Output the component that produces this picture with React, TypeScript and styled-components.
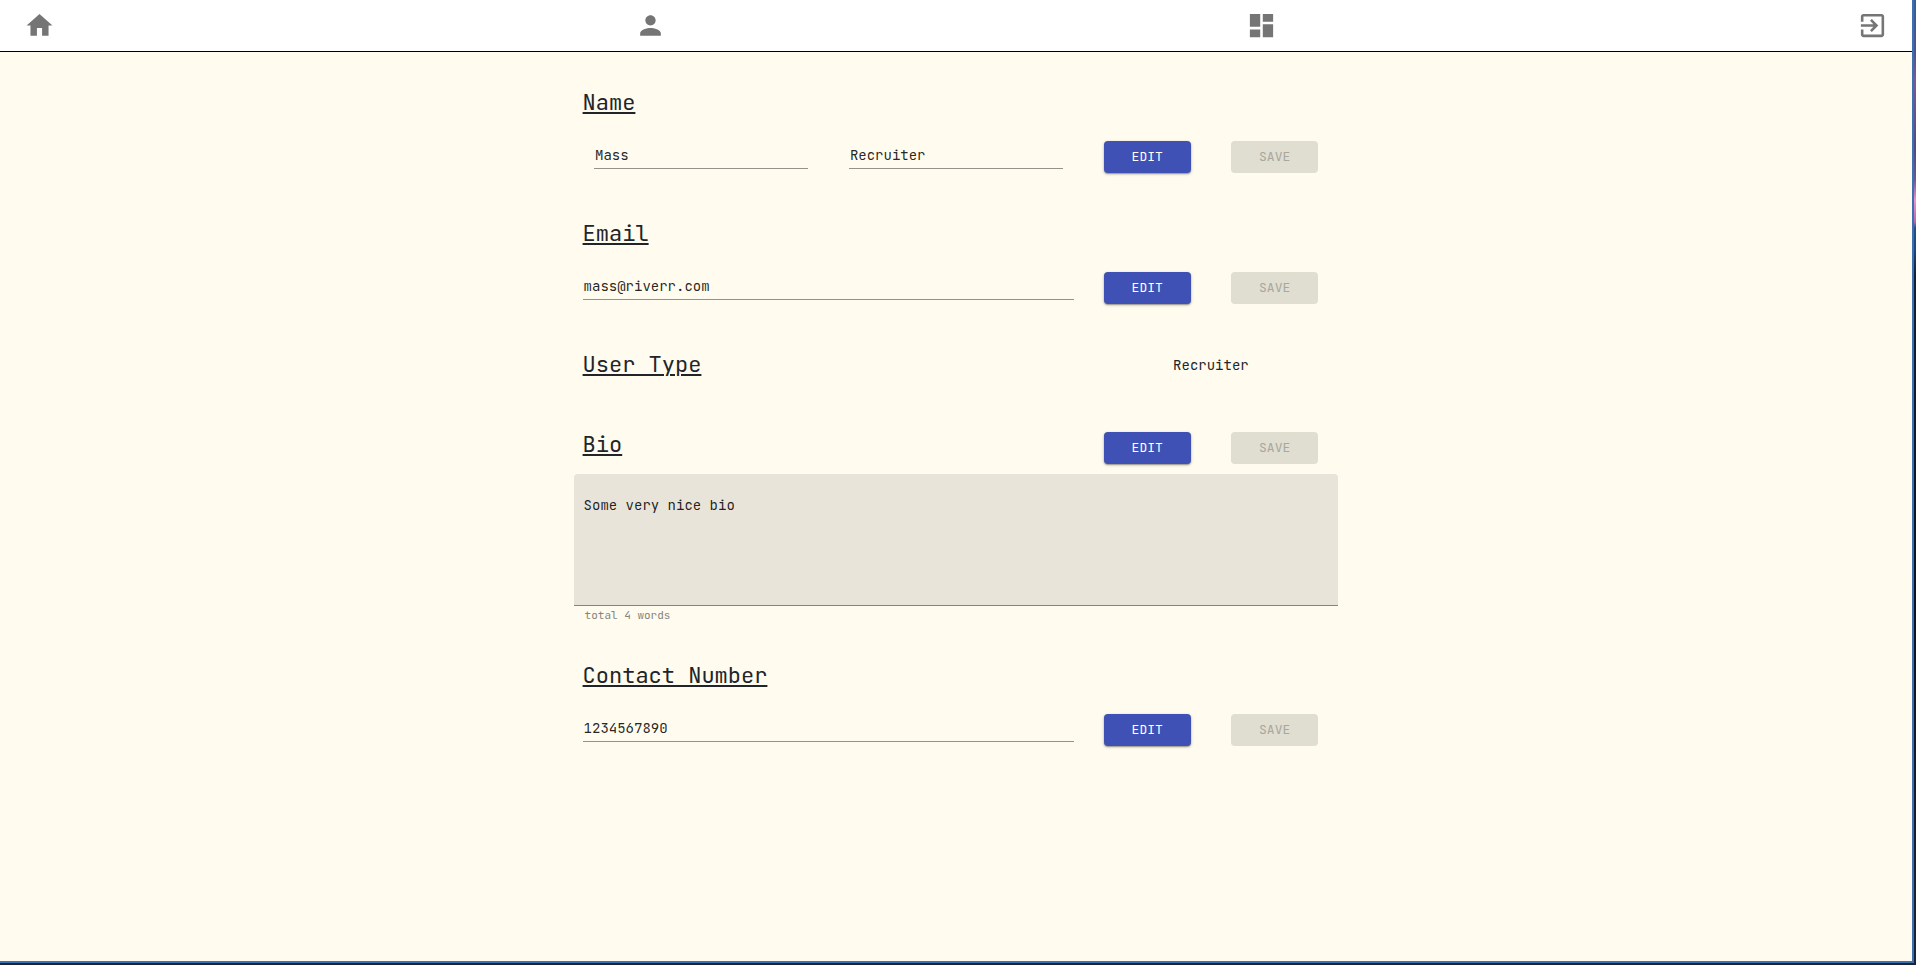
import React, { useState } from "react";
import styled, { createGlobalStyle } from "styled-components";

const GlobalStyle = createGlobalStyle`
  *, *::before, *::after { box-sizing: border-box; }
  body {
    margin: 0;
    color: #212529;
    font-family: "JetBrains Mono", "DejaVu Sans Mono", monospace;
    font-size: 14px;
  }
`;

const Desktop = styled.div`
  display: flex;
  min-height: 100vh;
  padding: 0 2px 2px 0;
  background: linear-gradient(
    #35609c 0,
    #46558f 50px,
    #7a5a96 80px,
    #4d4a82 150px,
    #6a5796 180px,
    #ee92cc 200px,
    #b06bb0 222px,
    #234f8f 228px,
    #1d4680 250px,
    #101f36 275px,
    #0a1222 600px,
    #1b2336 100%
  );
`;

const Window = styled.div`
  flex: 1;
  border: solid #3e6fae;
  border-width: 0 2px 2px 0;
  background: #fffbee;
`;

const NavBar = styled.nav`
  display: flex;
  align-items: center;
  justify-content: space-between;
  padding: 10px 24px;
  border-bottom: 1px solid #000;
  background: #fff;
`;

const NavLink = styled.a`
  display: flex;
  color: #757575;
`;

const NavIcon = styled.svg`
  width: 31px;
  height: 31px;
  fill: currentColor;
`;

const Profile = styled.main`
  display: flex;
  flex-direction: column;
  gap: 20px;
  width: 40%;
  min-width: 560px;
  margin: 0 auto;
  padding: 20px 0;
`;

const Section = styled.section`
  display: flex;
  flex-direction: column;
`;

const HeadingRow = styled.div`
  display: grid;
  grid-template-columns: 4fr 1fr 1fr;
  align-items: center;
  height: 60px;
  padding-top: 2px;
`;

const Heading = styled.h2`
  margin: 0;
  padding-left: 9px;
  font-size: 22px;
  font-weight: 400;
  line-height: 28px;
  text-decoration: underline;
  text-decoration-thickness: 2px;
  text-underline-offset: 2px;
`;

const UserType = styled.span`
  grid-column: 2 / 4;
  text-align: center;
`;

const FieldRow = styled.div<{ $split?: boolean }>`
  display: grid;
  grid-template-columns: ${(p) => (p.$split ? "2fr 2fr" : "4fr")} 1fr 1fr;
  align-items: start;
  justify-items: center;
  height: 51px;
  padding-top: 9px;
`;

const TextInput = styled.input<{ $wide?: boolean }>`
  width: ${(p) => (p.$wide ? "calc(100% - 18px)" : "84%")};
  height: 28px;
  padding: 0 1px;
  border: 0;
  border-bottom: 1px solid rgba(0, 0, 0, 0.42);
  border-radius: 0;
  outline: 0;
  background: transparent;
  color: rgba(0, 0, 0, 0.87);
  font: inherit;
`;

const Button = styled.button`
  justify-self: center;
  width: 68%;
  height: 32px;
  padding: 0 0 1px;
  border: 0;
  border-radius: 4px;
  background: #3f51b5;
  box-shadow: 0 1px 3px rgba(0, 0, 0, 0.3), 0 1px 1px rgba(0, 0, 0, 0.2);
  color: #fff;
  font: inherit;
  font-size: 13px;
  text-transform: uppercase;
  cursor: pointer;

  &:disabled {
    background: #e0ded1;
    box-shadow: none;
    color: #a9a79d;
    cursor: default;
  }
`;

const BioRow = styled(HeadingRow)`
  & > ${Button} {
    align-self: end;
    margin-bottom: 10px;
  }
`;

const BioInput = styled.textarea`
  display: block;
  width: 100%;
  height: 132px;
  padding: 22px 10px 9px;
  border: 0;
  border-bottom: 1px solid #85837b;
  border-radius: 4px 4px 0 0;
  outline: 0;
  resize: none;
  background: #e8e4da;
  color: rgba(0, 0, 0, 0.87);
  font: inherit;
  line-height: 18px;
`;

const Helper = styled.p`
  margin: 0;
  padding-left: 11px;
  color: #85837b;
  font-size: 11px;
  line-height: 19px;
`;

const navItems = [
  { label: "Home", path: "M10 20v-6h4v6h5v-8h3L12 3 2 12h3v8z" },
  {
    label: "Profile",
    path: "M12 12c2.21 0 4-1.79 4-4s-1.79-4-4-4-4 1.79-4 4 1.79 4 4 4zm0 2c-2.67 0-8 1.34-8 4v2h16v-2c0-2.66-5.33-4-8-4z",
  },
  {
    label: "Dashboard",
    path: "M3 13h8V3H3v10zm0 8h8v-6H3v6zm10 0h8V11h-8v10zm0-18v6h8V3h-8z",
  },
  {
    label: "Log out",
    path: "M10.09 15.59L11.5 17l5-5-5-5-1.41 1.41L12.67 11H3v2h9.67l-2.58 2.59zM19 3H5c-1.11 0-2 .9-2 2v4h2V5h14v14H5v-4H3v4c0 1.1.89 2 2 2h14c1.1 0 2-.9 2-2V5c0-1.1-.9-2-2-2z",
  },
];

function Actions({ editing, onChange }: { editing: boolean; onChange: (editing: boolean) => void }) {
  return (
    <>
      <Button type="button" disabled={editing} onClick={() => onChange(true)}>Edit</Button>
      <Button type="button" disabled={!editing} onClick={() => onChange(false)}>Save</Button>
    </>
  );
}

function FieldSection({ title, fields }: { title: string; fields: { label: string; value: string }[] }) {
  const [editing, setEditing] = useState(false);
  const split = fields.length > 1;
  return (
    <Section>
      <HeadingRow><Heading>{title}</Heading></HeadingRow>
      <FieldRow $split={split}>
        {fields.map((f) => (
          <TextInput key={f.label} $wide={!split} aria-label={f.label} defaultValue={f.value} readOnly={!editing} />
        ))}
        <Actions editing={editing} onChange={setEditing} />
      </FieldRow>
    </Section>
  );
}

function BioSection() {
  const [editing, setEditing] = useState(false);
  const [bio, setBio] = useState("Some very nice bio");
  return (
    <Section>
      <BioRow>
        <Heading>Bio</Heading>
        <Actions editing={editing} onChange={setEditing} />
      </BioRow>
      <BioInput aria-label="Bio" value={bio} readOnly={!editing} onChange={(e) => setBio(e.target.value)} />
      <Helper>{`total ${bio.split(" ").length} words`}</Helper>
    </Section>
  );
}

export default function App() {
  return (
    <>
      <GlobalStyle />
      <Desktop>
        <Window>
          <NavBar>
            {navItems.map((item) => (
              <NavLink key={item.label} href="#" aria-label={item.label}>
                <NavIcon viewBox="0 0 24 24" aria-hidden="true"><path d={item.path} /></NavIcon>
              </NavLink>
            ))}
          </NavBar>
          <Profile>
            <FieldSection
              title="Name"
              fields={[{ label: "First name", value: "Mass" }, { label: "Last name", value: "Recruiter" }]}
            />
            <FieldSection title="Email" fields={[{ label: "Email", value: "mass@riverr.com" }]} />
            <Section>
              <HeadingRow>
                <Heading>User Type</Heading>
                <UserType>Recruiter</UserType>
              </HeadingRow>
            </Section>
            <BioSection />
            <FieldSection title="Contact Number" fields={[{ label: "Contact number", value: "1234567890" }]} />
          </Profile>
        </Window>
      </Desktop>
    </>
  );
}
